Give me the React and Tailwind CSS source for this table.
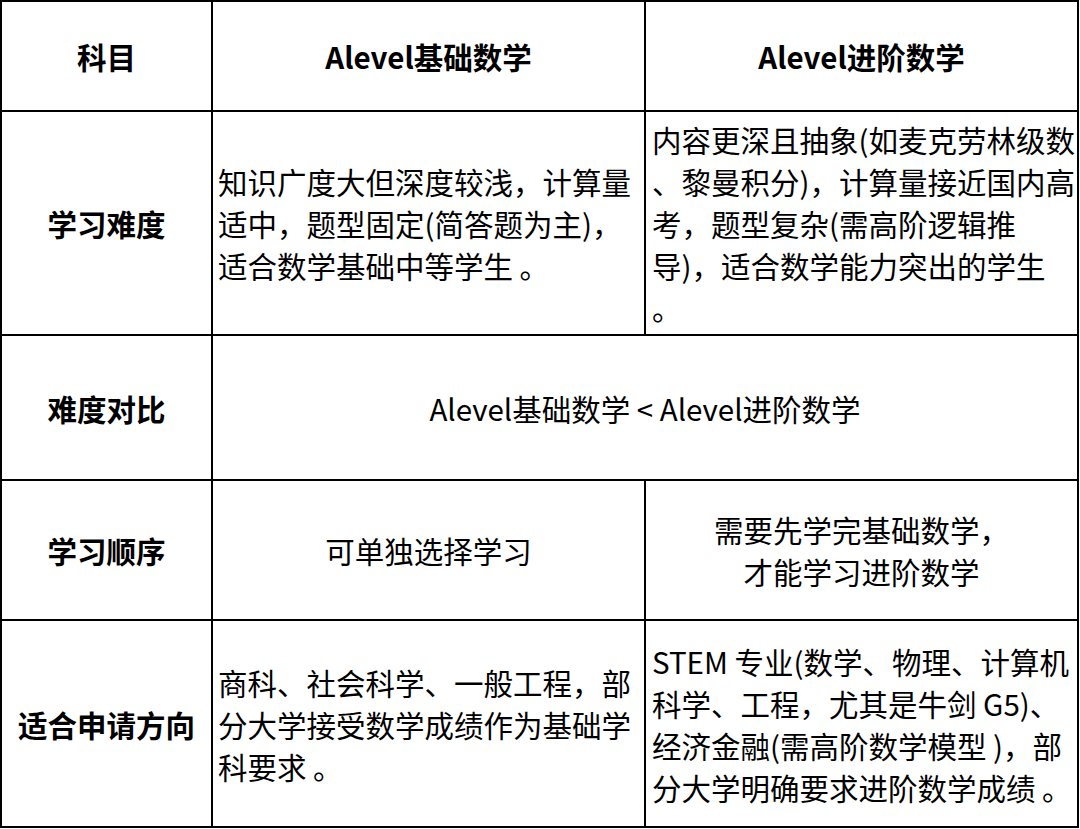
import React from "react";

const font = { fontFamily: '"Noto Sans CJK SC", "Noto Sans", sans-serif' };

function Lines({ lines }) {
  return (
    <div className="whitespace-pre">
      {lines.map((l, i) => (
        <div key={i}>{l}</div>
      ))}
    </div>
  );
}

export default function App() {
  const head = "bg-white flex items-center justify-center font-bold text-[29.5px] leading-[42px] text-black";
  const label = "bg-white flex items-center justify-center font-bold text-[29.5px] leading-[42px] text-black";
  const cellL = "bg-white flex items-center justify-start px-[5px] text-[29.5px] leading-[42px] text-black";
  const cellC = "bg-white flex items-center justify-center text-center text-[29.5px] leading-[42px] text-black";
  return (
    <div className="w-[1080px] h-[829px] bg-white" style={font}>
      <div className="w-[1079px] h-[828px] bg-black p-[2px] grid grid-cols-[209px_431px_431px] grid-rows-[108px_222px_143px_138px_205px] gap-[2px]">
        <div className={head}>科目</div>
        <div className={head}>Alevel基础数学</div>
        <div className={head}>Alevel进阶数学</div>

        <div className={label}>学习难度</div>
        <div className={cellL}>
          <Lines lines={["知识广度大但深度较浅，计算量", "适中，题型固定(简答题为主)，", "适合数学基础中等学生 。"]} />
        </div>
        <div className={cellL + " px-[6px]"}>
          <Lines
            lines={[
              "内容更深且抽象(如麦克劳林级数",
              "、黎曼积分)，计算量接近国内高",
              "考，题型复杂(需高阶逻辑推",
              "导)，适合数学能力突出的学生",
              "。",
            ]}
          />
        </div>

        <div className={label}>难度对比</div>
        <div className={cellC + " col-span-2"}>Alevel基础数学 &lt; Alevel进阶数学</div>

        <div className={label}>学习顺序</div>
        <div className={cellC}>可单独选择学习</div>
        <div className={cellC}>
          <Lines lines={["需要先学完基础数学，", "才能学习进阶数学"]} />
        </div>

        <div className={label}>适合申请方向</div>
        <div className={cellL}>
          <Lines lines={["商科、社会科学、一般工程，部", "分大学接受数学成绩作为基础学", "科要求 。"]} />
        </div>
        <div className={cellL + " px-[6px]"}>
          <Lines
            lines={[
              "STEM 专业(数学、物理、计算机",
              "科学、工程，尤其是牛剑 G5)、",
              "经济金融(需高阶数学模型 )，部",
              "分大学明确要求进阶数学成绩 。",
            ]}
          />
        </div>
      </div>
    </div>
  );
}
